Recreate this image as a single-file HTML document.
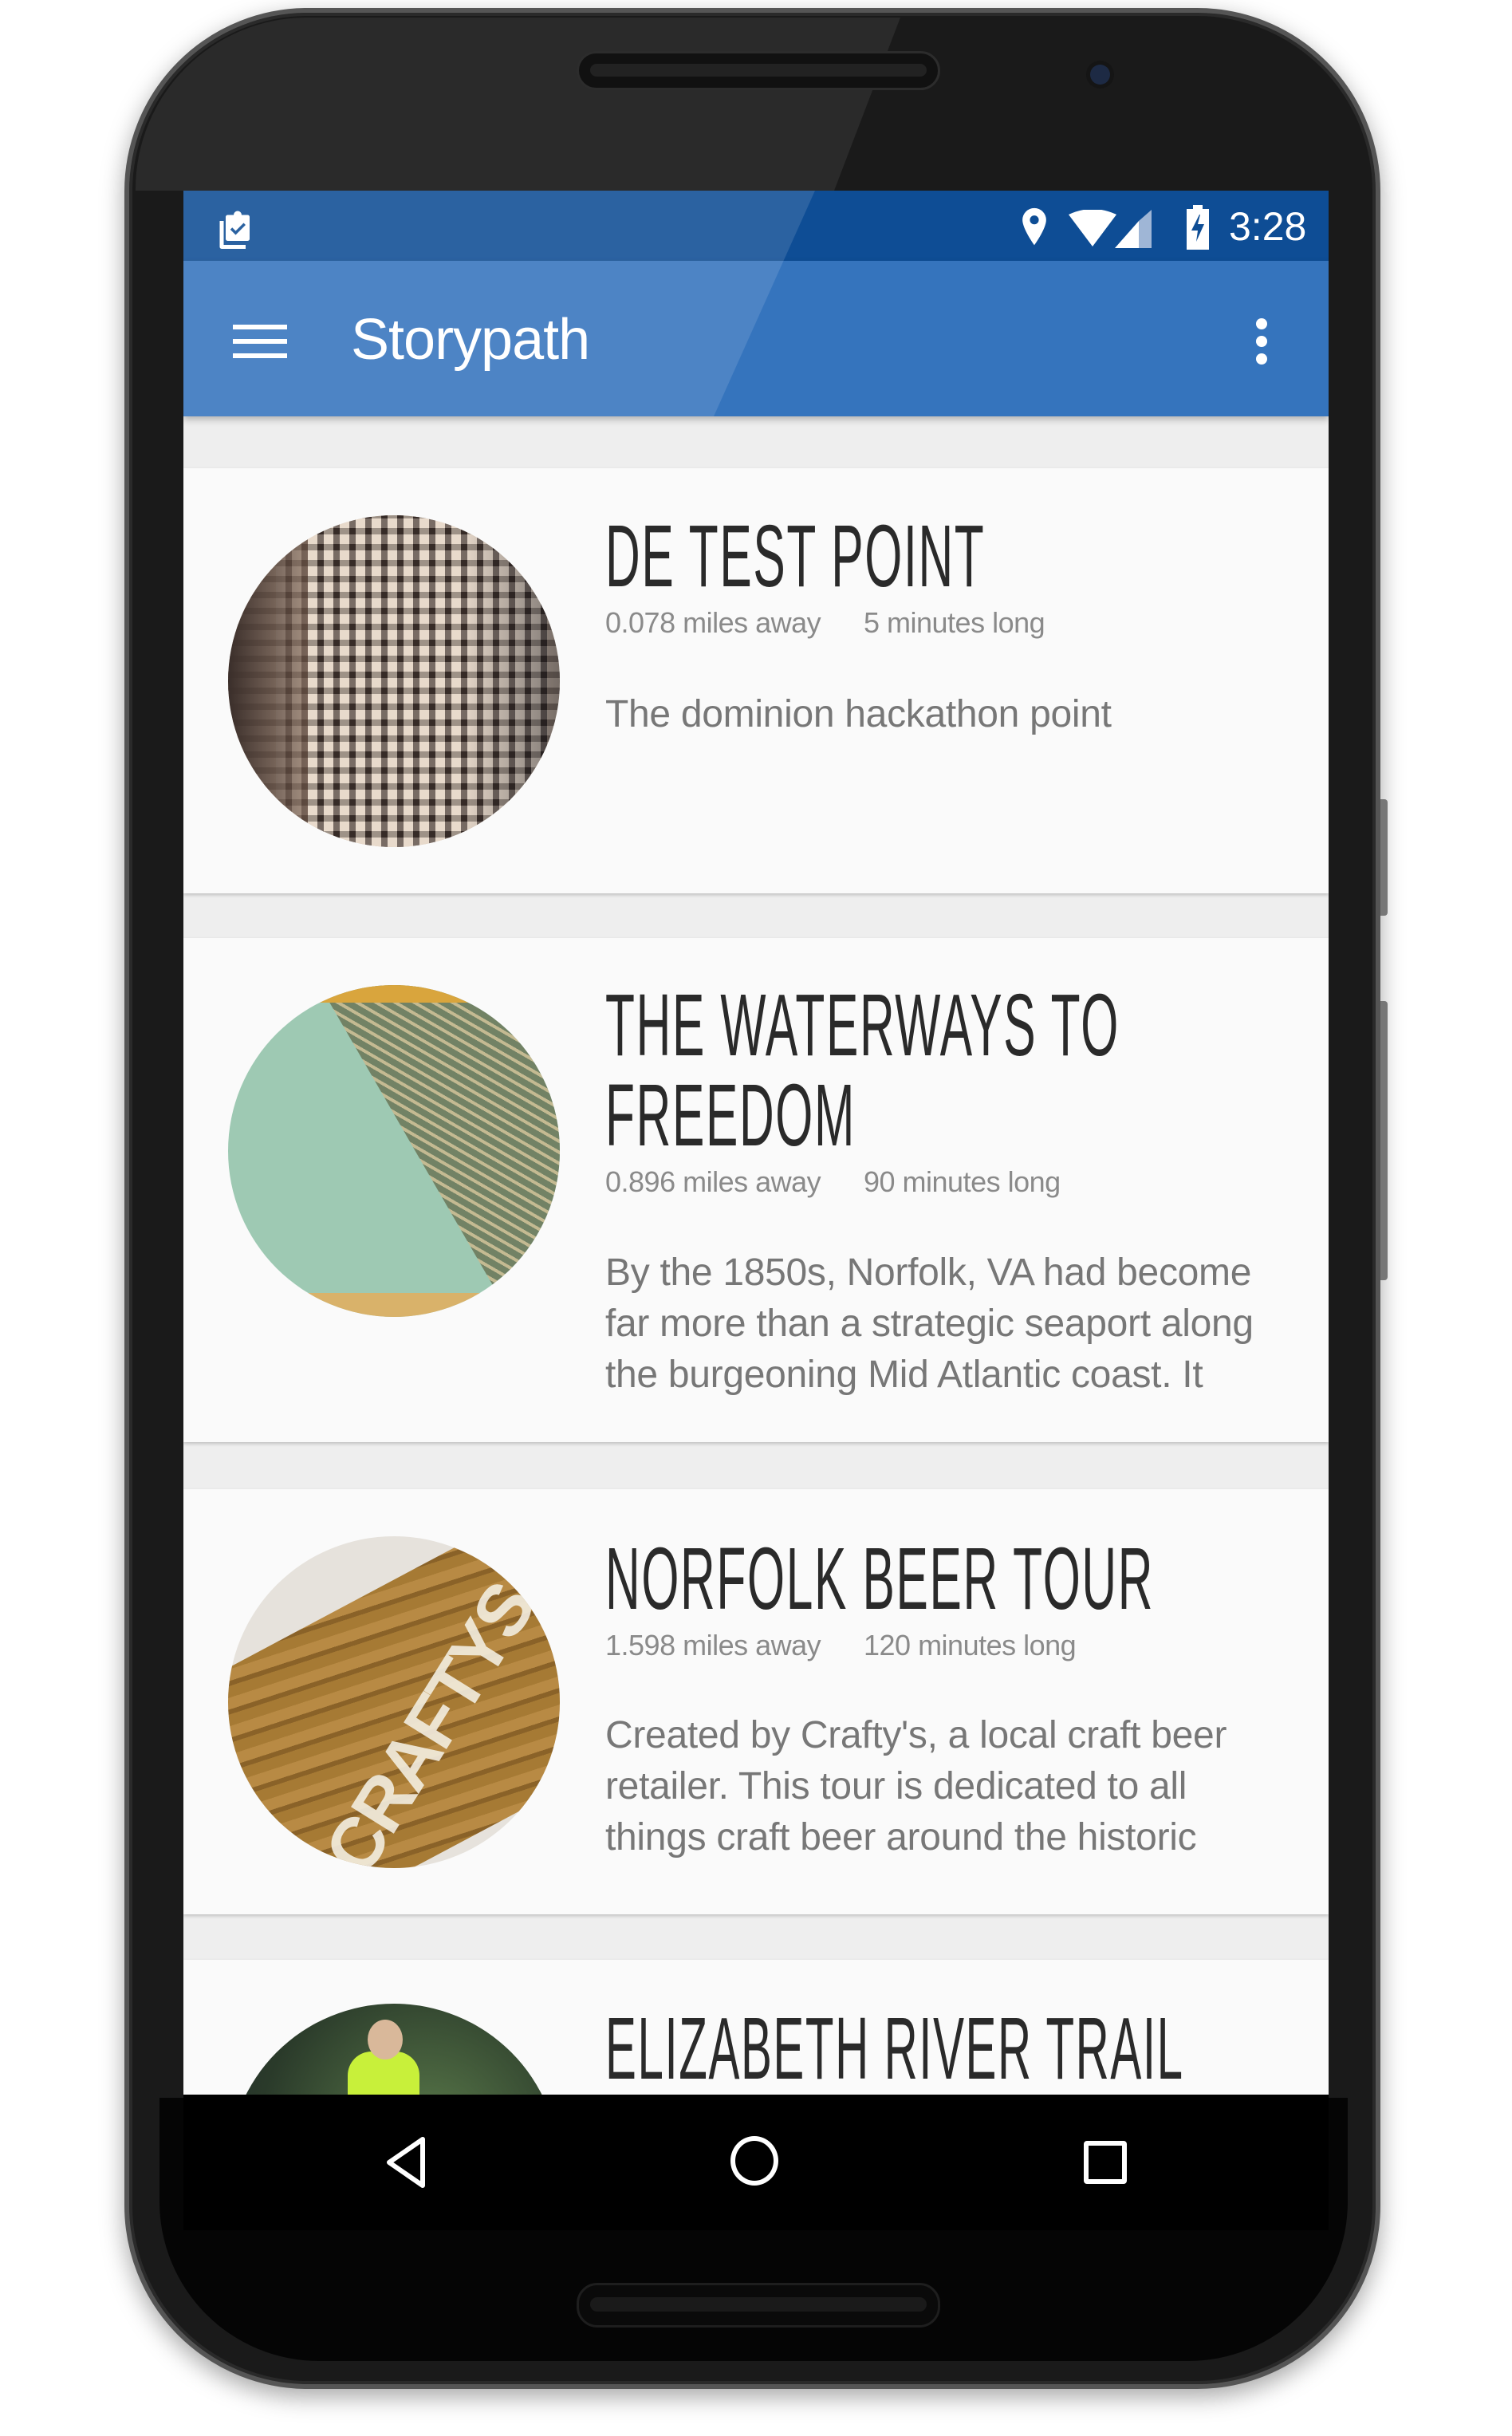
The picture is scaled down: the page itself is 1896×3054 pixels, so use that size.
<!DOCTYPE html>
<html><head><meta charset="utf-8"><style>
*{margin:0;padding:0;box-sizing:border-box}
body{width:1896px;height:3054px;background:#fff;position:relative;overflow:hidden;font-family:"Liberation Sans",sans-serif}
.abs{position:absolute}
.phone{left:156px;top:10px;width:1575px;height:2985px;border-radius:230px;background:#1a1a1a;border:6px solid #555;box-shadow:0 10px 30px rgba(0,0,0,.35), inset 0 0 0 4px #2a2a2a}
.screen{left:230px;top:239px;width:1436px;height:2392px;background:#eeeeee;overflow:hidden}
.status{left:0;top:0;width:1436px;height:88px;background:#0e4d95}
.appbar{left:0;top:88px;width:1436px;height:195px;background:#3574bd;box-shadow:0 4px 8px rgba(0,0,0,.25)}
.card{left:0;width:1436px;background:#fafafa;box-shadow:0 2px 4px rgba(0,0,0,.2)}
.circ{position:absolute;left:56px;width:416px;height:416px;border-radius:50%;overflow:hidden}
.title{position:absolute;left:529px;font-size:110px;line-height:113px;color:#2a2a2a;transform:scaleX(.55);transform-origin:left top;white-space:nowrap;letter-spacing:3px}
.meta{position:absolute;font-size:36px;color:#8a8a8a;letter-spacing:-.5px;white-space:nowrap}
.desc{position:absolute;left:529px;font-size:48px;line-height:64px;color:#777;letter-spacing:-.3px;white-space:nowrap}
</style></head><body>
<div class="abs phone"></div>
<div class="abs" style="left:170px;top:22px;width:1550px;height:217px;border-radius:215px 215px 0 0;background:#2a2a2a;clip-path:polygon(0 0,959px 0,876px 217px,0 217px)"></div>
<div class="abs" style="left:200px;top:2630px;width:1490px;height:330px;border-radius:0 0 200px 200px;background:#050505"></div>
<div class="abs" style="left:723px;top:64px;width:456px;height:49px;border-radius:25px;background:#111;border:3px solid #2c2c2c"></div>
<div class="abs" style="left:740px;top:80px;width:422px;height:16px;border-radius:8px;background:#222"></div>
<div class="abs" style="left:1367px;top:81px;width:25px;height:25px;border-radius:50%;background:#1d2a44;box-shadow:0 0 0 5px #151515"></div>
<div class="abs" style="left:1731px;top:1002px;width:9px;height:146px;background:#777;border-radius:0 4px 4px 0"></div>
<div class="abs" style="left:1731px;top:1255px;width:9px;height:350px;background:#777;border-radius:0 4px 4px 0"></div>
<div class="abs" style="left:723px;top:2862px;width:456px;height:56px;border-radius:26px;background:#0a0a0a;border:3px solid #1e1e1e"></div>
<div class="abs" style="left:740px;top:2880px;width:422px;height:18px;border-radius:9px;background:#1a1a1a"></div>
<div class="abs" style="left:230px;top:2626px;width:1436px;height:170px;background:#000"></div>

<div class="abs screen">
  <div class="abs status"></div>
  <div class="abs appbar"></div>
  <div class="abs" style="left:0;top:0;width:1436px;height:283px;background:rgba(255,255,255,.12);clip-path:polygon(0 0,792px 0,665px 283px,0 283px)"></div>
  <svg class="abs" style="left:38px;top:18px" width="60" height="60" viewBox="0 0 24 24"><path fill="#fff" d="M7 5h3a2 2 0 0 1 4 0h3a1 1 0 0 1 1 1v11a1 1 0 0 1-1 1H7a1 1 0 0 1-1-1V6a1 1 0 0 1 1-1zm2.3 6.3-1 1L11 15l5-5-1-1-4 4z"/><path fill="#fff" d="M3 8h2v12h11v2H4a1 1 0 0 1-1-1z"/></svg>
  <svg class="abs" style="left:1044px;top:20px" width="46" height="52" viewBox="0 0 24 28"><path fill="#fff" d="M12 1a8 8 0 0 0-8 8c0 6 8 17 8 17s8-11 8-17a8 8 0 0 0-8-8zm0 11a3 3 0 1 1 0-6 3 3 0 0 1 0 6z"/></svg>
  <svg class="abs" style="left:1110px;top:24px" width="108" height="50" viewBox="0 0 108 50"><path fill="#fff" d="M0 6Q30-8 60 6L30 46z"/><path fill="#fff" d="M58 48L88 14V48z"/><path fill="#9fb6d6" d="M88 14L104 0V48H88z"/></svg>
  <svg class="abs" style="left:1256px;top:18px" width="32" height="56" viewBox="0 0 32 56"><path fill="#fff" d="M10 0h12v5h8v51H2V5h8zM18 12 8 32h8l-2 14 10-22h-8l3-12z"/></svg>
  <div class="abs" style="left:1311px;top:16px;font-size:50px;color:#fff">3:28</div>
  <div class="abs" style="left:62px;top:168px;width:68px;height:6px;background:#fff"></div>
  <div class="abs" style="left:62px;top:186px;width:68px;height:6px;background:#fff"></div>
  <div class="abs" style="left:62px;top:204px;width:68px;height:6px;background:#fff"></div>
  <div class="abs" style="left:210px;top:146px;font-size:72px;color:#fff;letter-spacing:-1px">Storypath</div>
  <div class="abs" style="left:1345px;top:160px;width:14px;height:14px;border-radius:50%;background:#fff"></div>
  <div class="abs" style="left:1345px;top:182px;width:14px;height:14px;border-radius:50%;background:#fff"></div>
  <div class="abs" style="left:1345px;top:204px;width:14px;height:14px;border-radius:50%;background:#fff"></div>

  <div class="abs card" style="top:348px;height:533px">
    <div class="circ" style="top:59px;background:#c9b3a0"><div style="position:absolute;left:60px;top:0;width:340px;height:416px;background:repeating-linear-gradient(90deg,#ded0c2 0 12px,#3e322e 12px 20px)"></div><div style="position:absolute;inset:0;background:repeating-linear-gradient(0deg,rgba(255,240,225,.3) 0 12px,rgba(40,30,25,.35) 12px 20px)"></div><div style="position:absolute;left:0;top:0;width:100px;height:416px;background:linear-gradient(90deg,#3a2e2a,rgba(120,95,80,.6))"></div><div style="position:absolute;inset:0;background:linear-gradient(90deg,transparent 70%,rgba(20,20,25,.5))"></div></div>
    <div class="title" style="top:54px">DE TEST POINT</div>
    <div class="meta" style="left:529px;top:173px">0.078 miles away</div>
    <div class="meta" style="left:853px;top:173px">5 minutes long</div>
    <div class="desc" style="top:277px">The dominion hackathon point</div>
  </div>

  <div class="abs card" style="top:937px;height:632px">
    <div class="circ" style="top:59px;background:#9ec9b3"><div style="position:absolute;left:80px;top:-60px;width:420px;height:560px;background:repeating-linear-gradient(60deg,#6d7a5c 0 8px,#c8b88e 8px 12px);transform:rotate(-30deg);transform-origin:0 0;opacity:.9"></div><div style="position:absolute;left:0;top:0;width:416px;height:22px;background:#d9a53d"></div><div style="position:absolute;left:0;bottom:0;width:416px;height:30px;background:#d9b26a"></div></div>
    <div class="title" style="top:53px">THE WATERWAYS TO<br>FREEDOM</div>
    <div class="meta" style="left:529px;top:285px">0.896 miles away</div>
    <div class="meta" style="left:853px;top:285px">90 minutes long</div>
    <div class="desc" style="top:388px">By the 1850s, Norfolk, VA had become<br>far more than a strategic seaport along<br>the burgeoning Mid Atlantic coast. It</div>
  </div>

  <div class="abs card" style="top:1628px;height:533px">
    <div class="circ" style="top:59px;background:#e6e2dc"><div style="position:absolute;left:-40px;top:70px;width:520px;height:330px;background:repeating-linear-gradient(10deg,#a67a34 0 14px,#8a6228 14px 20px,#b88a44 20px 34px);transform:rotate(-28deg)"></div><div style="position:absolute;left:50px;top:190px;font-size:92px;font-weight:bold;color:#f3eee0;transform:rotate(-58deg);letter-spacing:-4px;opacity:.9">CRAFTYS</div></div>
    <div class="title" style="top:56px">NORFOLK BEER TOUR</div>
    <div class="meta" style="left:529px;top:175px">1.598 miles away</div>
    <div class="meta" style="left:853px;top:175px">120 minutes long</div>
    <div class="desc" style="top:277px">Created by Crafty's, a local craft beer<br>retailer. This tour is dedicated to all<br>things craft beer around the historic</div>
  </div>

  <div class="abs card" style="top:2218px;height:300px">
    <div class="circ" style="top:55px;background:radial-gradient(circle at 60% 40%,#5a7a4a,#2a3a2a 60%,#1e2630)"><div style="position:absolute;left:150px;top:60px;width:90px;height:200px;background:#c8f03a;border-radius:30px"></div><div style="position:absolute;left:175px;top:20px;width:44px;height:50px;background:#d9b89a;border-radius:50%"></div></div>
    <div class="title" style="top:55px;transform:scaleX(.53)">ELIZABETH RIVER TRAIL</div>
  </div>

  <div class="abs" style="left:0;top:2387px;width:1436px;height:170px;background:#000"></div>
</div>
<svg class="abs" style="left:480px;top:2676px" width="60" height="70" viewBox="0 0 60 70"><path d="M50 6V64L8 35z" fill="none" stroke="#fff" stroke-width="6" stroke-linejoin="round"/></svg>
<div class="abs" style="left:916px;top:2678px;width:60px;height:62px;border-radius:50%;border:6px solid #fff"></div>
<div class="abs" style="left:1359px;top:2684px;width:54px;height:54px;border-radius:4px;border:6px solid #fff"></div>
</body></html>
